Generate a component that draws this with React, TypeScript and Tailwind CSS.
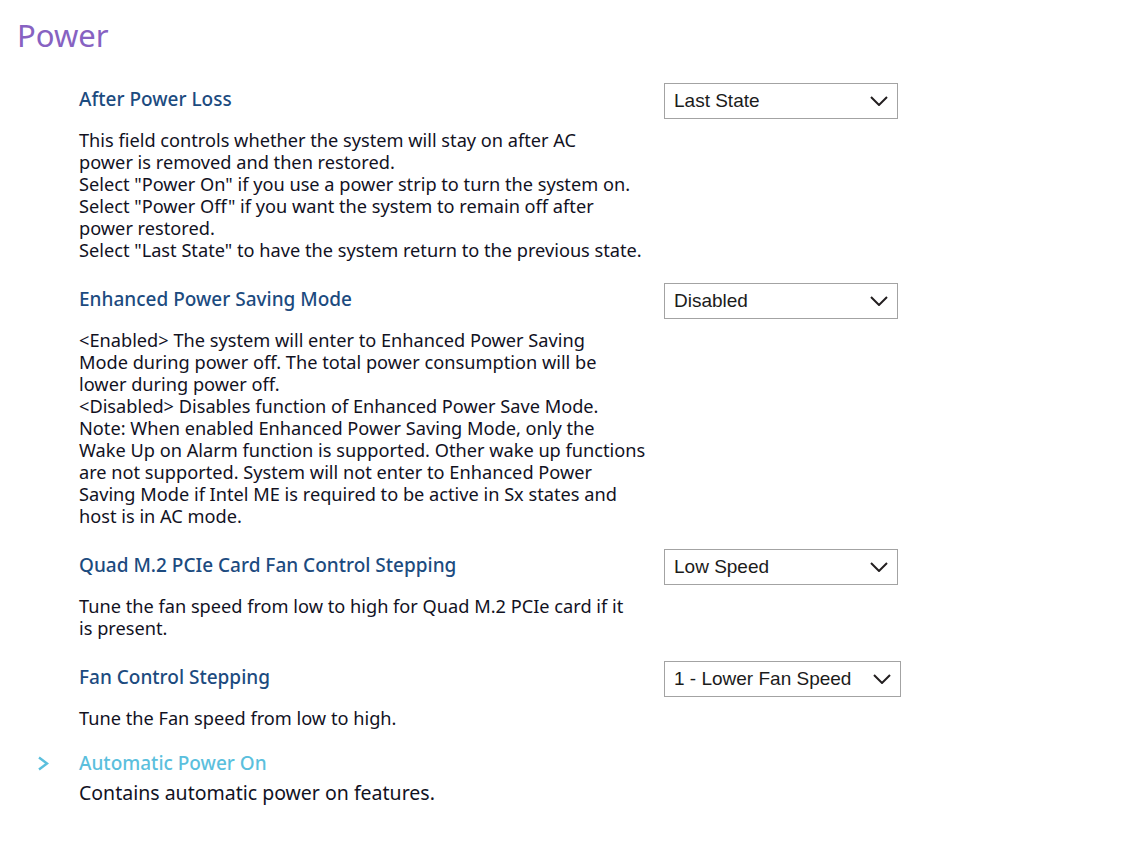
import React from 'react';

interface Setting {
  label: string;
  value: string;
  lines: string[];
}

const settings: Setting[] = [
  {
    label: 'After Power Loss',
    value: 'Last State',
    lines: [
      'This field controls whether the system will stay on after AC',
      'power is removed and then restored.',
      'Select "Power On" if you use a power strip to turn the system on.',
      'Select "Power Off" if you want the system to remain off after',
      'power restored.',
      'Select "Last State" to have the system return to the previous state.',
    ],
  },
  {
    label: 'Enhanced Power Saving Mode',
    value: 'Disabled',
    lines: [
      '<Enabled> The system will enter to Enhanced Power Saving',
      'Mode during power off. The total power consumption will be',
      'lower during power off.',
      '<Disabled> Disables function of Enhanced Power Save Mode.',
      'Note: When enabled Enhanced Power Saving Mode, only the',
      'Wake Up on Alarm function is supported. Other wake up functions',
      'are not supported. System will not enter to Enhanced Power',
      'Saving Mode if Intel ME is required to be active in Sx states and',
      'host is in AC mode.',
    ],
  },
  {
    label: 'Quad M.2 PCIe Card Fan Control Stepping',
    value: 'Low Speed',
    lines: [
      'Tune the fan speed from low to high for Quad M.2 PCIe card if it',
      'is present.',
    ],
  },
  {
    label: 'Fan Control Stepping',
    value: '1 - Lower Fan Speed',
    lines: ['Tune the Fan speed from low to high.'],
  },
];

function Chevron({ className }: { className?: string }) {
  return (
    <svg className={className} viewBox="0 0 18 10" fill="none" stroke="currentColor" strokeWidth={2}>
      <path d="M1 1l8 8 8-8" />
    </svg>
  );
}

function SelectBox({ value }: { value: string }) {
  return (
    <div className="flex h-[36px] min-w-[234px] items-center justify-between gap-[22px] border border-[#a3a3a3] bg-white pl-[9px] pr-[9px]">
      <span className="whitespace-nowrap text-[19px] text-[#1b1b1b] [font-family:'Liberation_Sans',Arial,sans-serif]">
        {value}
      </span>
      <Chevron className="h-[10px] w-[18px] text-[#231f20]" />
    </div>
  );
}

export default function App() {
  return (
    <div className="min-h-screen bg-white [font-family:'Noto_Sans',Lato,sans-serif]">
      <h1 className="pl-[17px] pt-[15px] text-[31px] leading-[40px] text-[#8762c2]">Power</h1>

      <div className="mt-[28px] flex flex-col gap-[22px] pl-[79px]">
        {settings.map((s) => (
          <div key={s.label} className="flex">
            <div className="w-[585px]">
              <div className="flex h-[36px] items-center pb-1 text-[19px] font-medium text-[#1c4b7f]">
                {s.label}
              </div>
              <div className="mt-[10px] whitespace-nowrap text-[18.2px] leading-[22px] text-[#12121f]">
                {s.lines.map((l) => (
                  <div key={l}>{l}</div>
                ))}
              </div>
            </div>
            <SelectBox value={s.value} />
          </div>
        ))}
      </div>

      <div className="mt-[22px] flex">
        <div className="flex w-[79px] items-start pl-[37px] pt-[5px]">
          <svg className="h-[15px] w-[13px] text-[#5bbfdd]" viewBox="0 0 13 15" fill="none" stroke="currentColor" strokeWidth={2.4}>
            <path d="M2 1.5l8 6-8 6" />
          </svg>
        </div>
        <div>
          <div className="text-[19px] font-medium leading-[24px] text-[#5bbfdd]">Automatic Power On</div>
          <div className="mt-[6px] text-[19.5px] leading-[24px] text-[#12121f]">Contains automatic power on features.</div>
        </div>
      </div>
    </div>
  );
}
